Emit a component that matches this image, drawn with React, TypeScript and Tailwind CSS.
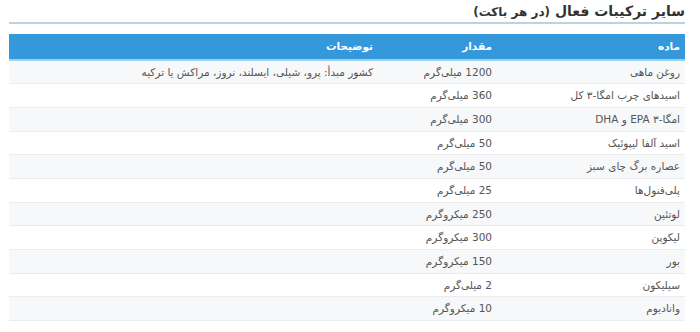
import React from "react";

const rows: [string, string, string][] = [
  ["روغن ماهی", "1200 میلی‌گرم", "کشور مبدأ: پرو، شیلی، ایسلند، نروز، مراکش یا ترکیه"],
  ["اسیدهای چرب امگا-۳ کل", "360 میلی‌گرم", ""],
  ["امگا-۳ EPA و DHA", "300 میلی‌گرم", ""],
  ["اسید آلفا لیپوئیک", "50 میلی‌گرم", ""],
  ["عصاره برگ چای سبز", "50 میلی‌گرم", ""],
  ["پلی‌فنول‌ها", "25 میلی‌گرم", ""],
  ["لوتئین", "250 میکروگرم", ""],
  ["لیکوپن", "300 میکروگرم", ""],
  ["بور", "150 میکروگرم", ""],
  ["سیلیکون", "2 میلی‌گرم", ""],
  ["وانادیوم", "10 میکروگرم", ""],
];

export default function App() {
  return (
    <div
      dir="rtl"
      className="w-[700px] h-[332px] bg-white overflow-hidden"
      style={{ fontFamily: '"DejaVu Sans", "Noto Sans", sans-serif' }}
    >
      <div className="mr-[15px] ml-[9px]">
        <div className="h-[24px] border-b-2 border-[#bcd3de] flex items-center">
          <h2 className="text-[14px] font-bold text-[#333] leading-none pb-[1px]">
            سایر ترکیبات فعال <span className="text-[12px]">(در هر باکت)</span>
          </h2>
        </div>
        <table className="w-full mt-[10px] border-collapse text-[10.5px] text-[#555]">
          <thead>
            <tr className="bg-[#3498db] text-white h-[26px] border-b-2 border-[#9fd3f3]">
              <th className="w-[188px] text-right font-bold pr-[5px]">ماده</th>
              <th className="w-[119px] text-right font-bold pr-[5px]">مقدار</th>
              <th className="text-right font-bold pr-[5px]">توضیحات</th>
            </tr>
          </thead>
          <tbody>
            {rows.map((r, i) => (
              <tr
                key={i}
                className={`h-[23.7px] border-b border-[#ececec] ${i % 2 === 0 ? "bg-[#f7f8f9]" : "bg-white"}`}
              >
                <td className="pr-[5px] pt-[1px] text-right">{r[0]}</td>
                <td className="pr-[5px] pt-[1px] text-right">{r[1]}</td>
                <td className="pr-[5px] pt-[1px] text-right">{r[2]}</td>
              </tr>
            ))}
          </tbody>
        </table>
      </div>
    </div>
  );
}
